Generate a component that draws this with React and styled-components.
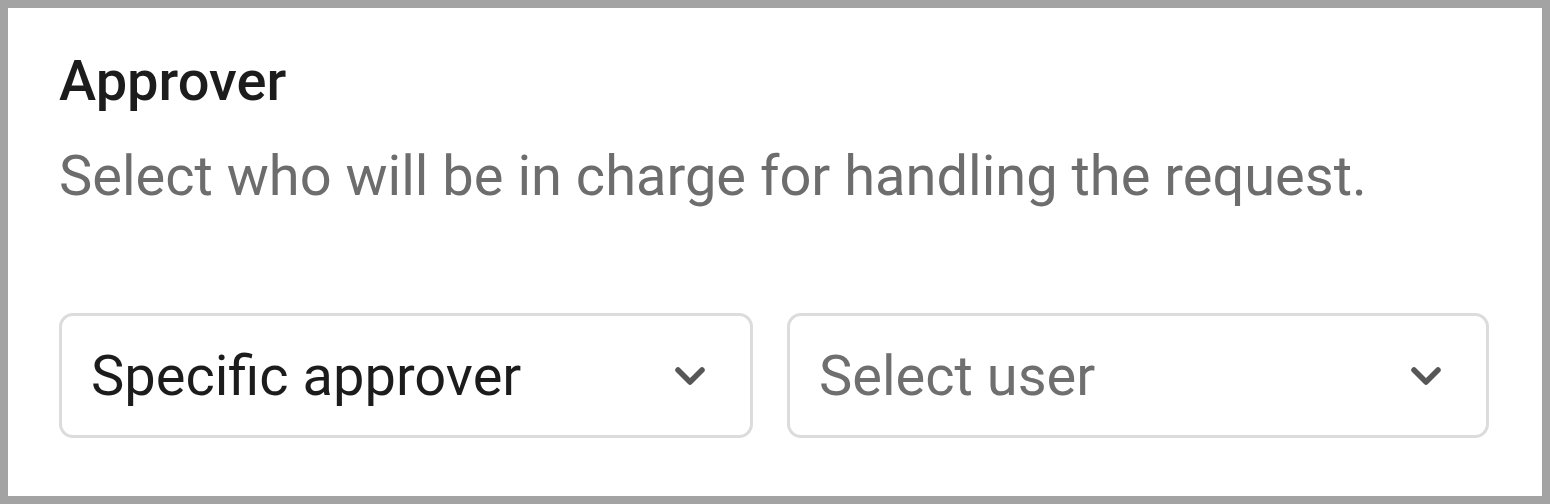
import React from "react";
import styled, { createGlobalStyle } from "styled-components";

const Global = createGlobalStyle`
  html, body {
    margin: 0;
    padding: 0;
    background: #a3a3a3;
  }
  * { box-sizing: border-box; }
`;

const Frame = styled.div`
  width: 1550px;
  height: 504px;
  border: 8px solid #a3a3a3;
  background: #ffffff;
  padding: 40px 53px 0 51px;
  font-family: Roboto, "Noto Sans", sans-serif;
`;

const Title = styled.h3`
  margin: 0;
  font-size: 56px;
  line-height: 66px;
  font-weight: 500;
  color: #1c1c1c;
`;

const Hint = styled.p`
  margin: 29px 0 0;
  font-size: 56px;
  line-height: 66px;
  font-weight: 400;
  color: #6d6d6d;
`;

const Row = styled.div`
  display: grid;
  grid-template-columns: 694px 1fr;
  gap: 34px;
  margin-top: 104px;
`;

const Select = styled.div`
  height: 125px;
  border: 3px solid #dcdcdc;
  border-radius: 14px;
  display: flex;
  align-items: center;
  justify-content: space-between;
  padding: 0 44px 0 29px;
  font-size: 56px;
  color: ${(p) => (p.$placeholder ? "#6f6f6f" : "#1c1c1c")};
`;

const Chevron = () => (
  <svg width="32" height="22" viewBox="0 0 32 22" fill="none">
    <path
      d="M4 5 L16 17 L28 5"
      stroke="#575757"
      strokeWidth="5.5"
      strokeLinecap="round"
      strokeLinejoin="round"
    />
  </svg>
);

export default function App() {
  return (
    <>
      <Global />
      <Frame>
        <Title>Approver</Title>
        <Hint>Select who will be in charge for handling the request.</Hint>
        <Row>
          <Select>
            <span>Specific approver</span>
            <Chevron />
          </Select>
          <Select $placeholder>
            <span>Select user</span>
            <Chevron />
          </Select>
        </Row>
      </Frame>
    </>
  );
}
